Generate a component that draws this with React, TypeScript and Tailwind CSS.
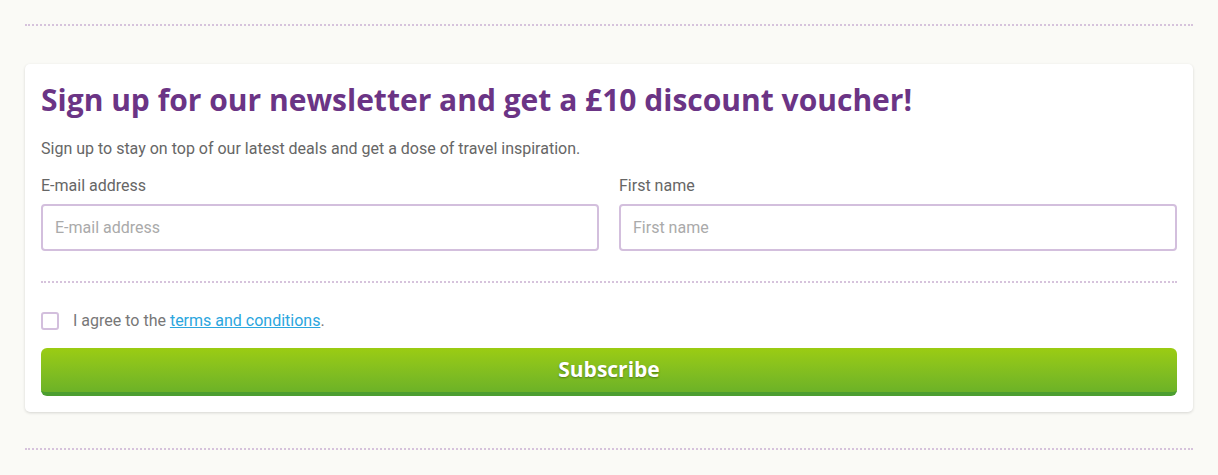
export default function App() {
  return (
    <div className="min-h-[475px] w-full bg-[#fafaf6] px-[25px] pt-[24px] font-['Roboto',sans-serif]">
      <div className="border-t-2 border-dotted border-[#d6c3dc]" />

      <section className="mt-[38px] rounded-[5px] bg-white px-4 pt-[16px] pb-[16px] shadow-[0_1px_3px_rgba(0,0,0,0.15)]">
        <h2 className="font-['Open_Sans',sans-serif] text-[30px] font-bold leading-[40px] text-[#6b3485]">
          Sign up for our newsletter and get a £10 discount voucher!
        </h2>
        <p className="mt-[19px] text-[16px] leading-[20px] text-[#666]">
          Sign up to stay on top of our latest deals and get a dose of travel inspiration.
        </p>

        <div className="mt-[17px] grid grid-cols-2 gap-5">
          {[
            { label: "E-mail address", type: "email" },
            { label: "First name", type: "text" },
          ].map((f) => (
            <label key={f.label} className="flex flex-col">
              <span className="text-[16px] leading-[20px] text-[#666]">{f.label}</span>
              <input
                type={f.type}
                placeholder={f.label}
                className="mt-[8px] h-[47px] rounded-[4px] border-2 border-[#d3bfdd] bg-white px-3 text-[16px] text-[#444] outline-none placeholder:text-[#aaa]"
              />
            </label>
          ))}
        </div>

        <div className="mt-[30px] border-t-2 border-dotted border-[#d6c3dc]" />

        <div className="mt-[28px] flex items-center gap-[14px]">
          <span className="h-[18px] w-[18px] rounded-[3px] border-2 border-[#d3bfdd] bg-white" />
          <span className="text-[16px] leading-[20px] text-[#777]">
            I agree to the{" "}
            <a href="#" className="text-[#2ba6de] underline">
              terms and conditions
            </a>
            .
          </span>
        </div>

        <button
          type="button"
          className="mt-[17px] flex h-[48px] w-full items-center justify-center rounded-[6px] border-b-4 border-[#4c9e30] bg-gradient-to-b from-[#9bcc12] to-[#6cb227] font-['Open_Sans',sans-serif] text-[21px] font-bold text-white [text-shadow:0_1px_2px_rgba(0,0,0,0.35)]"
        >
          Subscribe
        </button>
      </section>

      <div className="mt-[36px] border-t-2 border-dotted border-[#d6c3dc]" />
    </div>
  );
}
